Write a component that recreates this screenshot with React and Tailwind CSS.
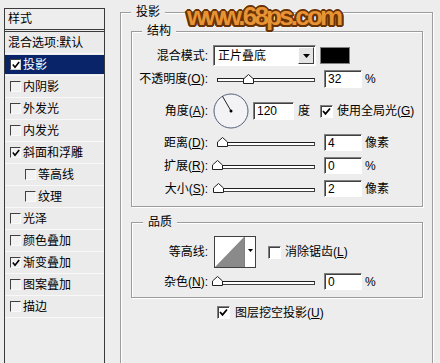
import React from 'react';

const U = ({ children }) => <span className="underline underline-offset-[1px]">{children}</span>;

function CheckMark({ color = '#000' }) {
  return (
    <svg width="9" height="9" viewBox="0 0 9 9">
      <polyline points="1,4 3.5,6.8 8,1.5" fill="none" stroke={color} strokeWidth="1.8" />
    </svg>
  );
}

function Check({ checked }) {
  return (
    <div className="w-[13px] h-[13px] shrink-0 bg-white border border-t-[#808080] border-l-[#808080] border-r-white border-b-white shadow-[inset_1px_1px_0_#404040] flex items-center justify-center">
      {checked && <CheckMark />}
    </div>
  );
}

function SmallCheck({ checked, white }) {
  return (
    <div
      className={
        white
          ? 'w-[11px] h-[11px] shrink-0 bg-white border border-t-[#404040] border-l-[#404040] border-r-[#d0d0d0] border-b-[#d0d0d0] flex items-center justify-center'
          : 'w-[11px] h-[11px] shrink-0 bg-[#f2f2f2] border border-t-[#404040] border-l-[#404040] border-r-[#fafafa] border-b-[#fafafa] flex items-center justify-center'
      }
    >
      {checked && (
        <svg width="8" height="8" viewBox="0 0 8 8">
          <polyline points="0.8,3.6 3,6.2 7.2,1" fill="none" stroke="#000" strokeWidth="1.6" />
        </svg>
      )}
    </div>
  );
}

function Input({ value, w = 'w-[38px]', h = 'h-[17px]' }) {
  return (
    <div
      className={`${w} ${h} shrink-0 bg-white border border-t-[#808080] border-l-[#808080] border-r-white border-b-white shadow-[inset_1px_1px_0_#404040] flex items-center pl-[3px]`}
    >
      {value}
    </div>
  );
}

function Slider({ pos }) {
  return (
    <div className="relative w-[106px] h-[17px] shrink-0 flex items-center">
      <div className="ml-[4px] mt-[2px] w-[98px] h-[4px] bg-white border-t border-l border-b border-r border-t-[#202020] border-l-[#202020] border-b-[#404040] border-r-[#404040]" />
      <svg className="absolute top-[3px]" style={{ left: pos }} width="11" height="10" viewBox="0 0 11 10">
        <polygon points="0.5,9.5 0.5,5 5.5,0.5 10.5,5 10.5,9.5" fill="#fff" stroke="#202020" strokeWidth="1" />
      </svg>
    </div>
  );
}

function Label({ children }) {
  return <div className="w-[76px] shrink-0 text-right whitespace-nowrap">{children}</div>;
}

const items = [
  { t: '投影', c: true, sel: true },
  { t: '内阴影' },
  { t: '外发光' },
  { t: '内发光' },
  { t: '斜面和浮雕', c: true },
  { t: '等高线', sub: true },
  { t: '纹理', sub: true },
  { t: '光泽' },
  { t: '颜色叠加' },
  { t: '渐变叠加', c: true },
  { t: '图案叠加' },
  { t: '描边' },
];

export default function App() {
  return (
    <div className="relative w-[440px] h-[363px] overflow-hidden bg-[#ededed] flex items-start text-[12px] leading-none text-black font-['Liberation_Sans','Noto_Sans_CJK_SC',sans-serif]">
      {/* Left style list */}
      <div className="ml-[4px] mt-[8px] w-[101px] h-[370px] shrink-0 border border-[#3a3a3a] flex flex-col">
        <div className="h-[20px] flex items-center pl-[3px]">样式</div>
        <div className="h-[3px] border-t border-b border-[#3a3a3a]" />
        <div className="h-[22px] border-b border-[#f8f8f8] bg-[#ebebeb] flex items-center pl-[3px] whitespace-nowrap">混合选项:默认</div>
        {items.map((it) => (
          <div key={it.t} className="h-[22px] border-b border-[#f8f8f8] bg-[#ebebeb] pt-[1px]">
            <div
              className={
                it.sel
                  ? 'h-[19px] flex items-center gap-[1px] pl-[5px] bg-[#0a246a] text-white'
                  : it.sub
                  ? 'h-[19px] flex items-center gap-[1px] pl-[20px]'
                  : 'h-[19px] flex items-center gap-[1px] pl-[5px]'
              }
            >
              <SmallCheck checked={it.c} white={it.sel} />
              <span className="ml-[1px]">{it.t}</span>
            </div>
          </div>
        ))}
      </div>

      {/* Right: 投影 group */}
      <div className="relative ml-[15px] mt-[12px] w-[313px] h-[370px] shrink-0 border border-[#9c9c9c] shadow-[inset_1px_1px_0_#fff,1px_1px_0_#fff] flex flex-col">
        <div className="absolute left-[10px] top-[-7px] px-[5px] bg-[#ededed]">投影</div>

        {/* 结构 */}
        <div className="relative ml-[10px] mt-[18px] w-[292px] h-[176px] border border-[#9c9c9c] shadow-[inset_1px_1px_0_#fff,1px_1px_0_#fff] flex flex-col">
          <div className="absolute left-[10px] top-[-7px] px-[5px] bg-[#ededed]">结构</div>

          <div className="mt-[13px] h-[21px] flex items-center">
            <Label>混合模式:</Label>
            <div className="ml-[5px] w-[103px] h-[21px] bg-white border border-t-[#808080] border-l-[#808080] border-r-white border-b-white shadow-[inset_1px_1px_0_#404040] flex items-stretch">
              <div className="flex-1 flex items-center pl-[4px] pt-[1px]">正片叠底</div>
              <div className="w-[16px] my-[1px] mr-[1px] bg-[#e4e4e4] border border-t-white border-l-white border-r-[#404040] border-b-[#404040] flex items-center justify-center">
                <svg width="7" height="4" viewBox="0 0 7 4">
                  <polygon points="0,0 7,0 3.5,4" fill="#000" />
                </svg>
              </div>
            </div>
            <div className="ml-[4px] w-[30px] h-[17px] bg-black border border-[#808080]" />
          </div>

          <div className="mt-[4px] h-[18px] flex items-center">
            <Label>
              不透明度(<U>O</U>):
            </Label>
            <div className="ml-[5px]">
              <Slider pos={30} />
            </div>
            <div className="ml-[5px]">
              <Input value="32" h="h-[18px]" />
            </div>
            <span className="ml-[3px]">%</span>
          </div>

          <div className="mt-[5px] h-[36px] flex items-center">
            <Label>
              角度(<U>A</U>):
            </Label>
            <svg className="ml-[5px] shrink-0" width="36" height="36" viewBox="0 0 36 36">
              <circle cx="18" cy="18" r="17" fill="#f3f3f5" stroke="#55607c" strokeWidth="1" />
              <line x1="18" y1="18" x2="9.5" y2="3.3" stroke="#202020" strokeWidth="1" />
              <circle cx="18" cy="18" r="1.5" fill="#000" />
            </svg>
            <div className="ml-[4px]">
              <Input value="120" w="w-[41px]" h="h-[18px]" />
            </div>
            <span className="ml-[4px]">度</span>
            <div className="ml-[10px]">
              <Check checked />
            </div>
            <span className="ml-[4px] whitespace-nowrap">
              使用全局光(<U>G</U>)
            </span>
          </div>

          <div className="mt-[5px] h-[17px] flex items-center">
            <Label>
              距离(<U>D</U>):
            </Label>
            <div className="ml-[5px]">
              <Slider pos={4} />
            </div>
            <div className="ml-[5px]">
              <Input value="4" />
            </div>
            <span className="ml-[3px]">像素</span>
          </div>

          <div className="mt-[6px] h-[17px] flex items-center">
            <Label>
              扩展(<U>R</U>):
            </Label>
            <div className="ml-[5px]">
              <Slider pos={-1} />
            </div>
            <div className="ml-[5px]">
              <Input value="0" />
            </div>
            <span className="ml-[3px]">%</span>
          </div>

          <div className="mt-[6px] h-[17px] flex items-center">
            <Label>
              大小(<U>S</U>):
            </Label>
            <div className="ml-[5px]">
              <Slider pos={0} />
            </div>
            <div className="ml-[5px]">
              <Input value="2" />
            </div>
            <span className="ml-[3px]">像素</span>
          </div>
        </div>

        {/* 品质 */}
        <div className="relative ml-[10px] mt-[15px] w-[292px] h-[76px] border border-[#9c9c9c] shadow-[inset_1px_1px_0_#fff,1px_1px_0_#fff] flex flex-col">
          <div className="absolute left-[11px] top-[-7px] px-[5px] bg-[#ededed]">品质</div>

          <div className="mt-[13px] h-[32px] flex items-center">
            <Label>等高线:</Label>
            <div className="ml-[6px] w-[42px] h-[32px] border border-[#404040] bg-white flex">
              <svg width="29" height="30" viewBox="0 0 29 30" className="shrink-0">
                <rect x="0" y="0" width="29" height="30" fill="#fff" />
                <polygon points="0,30 29,0 29,30" fill="#8a8a8a" />
              </svg>
              <div className="flex-1 border-l border-[#808080] flex justify-center pt-[12px]">
                <svg width="5" height="3" viewBox="0 0 5 3">
                  <polygon points="0,0 5,0 2.5,3" fill="#000" />
                </svg>
              </div>
            </div>
            <div className="ml-[12px]">
              <Check />
            </div>
            <span className="ml-[4px] whitespace-nowrap">
              消除锯齿(<U>L</U>)
            </span>
          </div>

          <div className="mt-[5px] h-[17px] flex items-center">
            <Label>
              杂色(<U>N</U>):
            </Label>
            <div className="ml-[5px]">
              <Slider pos={-1} />
            </div>
            <div className="ml-[5px]">
              <Input value="0" />
            </div>
            <span className="ml-[3px]">%</span>
          </div>
        </div>

        <div className="mt-[8px] h-[13px] flex items-center pl-[96px]">
          <Check checked />
          <span className="ml-[5px] whitespace-nowrap">
            图层挖空投影(<U>U</U>)
          </span>
        </div>
      </div>

      {/* watermark */}
      <div className="absolute left-[187px] top-[3px] text-[26px] leading-none font-bold tracking-[-2.8px] text-[#e89434] font-['Liberation_Sans',sans-serif] [text-shadow:1px_0_0_#6a3305,-1px_0_0_#6a3305,0_1px_0_#6a3305,0_-1px_0_#6a3305,1px_1px_0_#6a3305,-1px_-1px_0_#6a3305,1px_-1px_0_#6a3305,-1px_1px_0_#6a3305,2px_0_0_#6a3305,-2px_0_0_#6a3305,0_2px_0_#6a3305,0_-2px_0_#6a3305,2px_1px_0_#6a3305,-2px_1px_0_#6a3305,1px_2px_0_#6a3305,-1px_2px_0_#6a3305,0_0_4px_#fff,0_0_4px_#fff]">
        www.68ps.com
      </div>
    </div>
  );
}
